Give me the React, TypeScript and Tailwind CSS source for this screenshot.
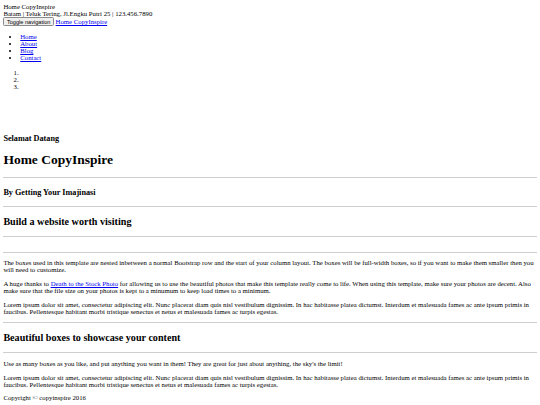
export default function App() {
  return (
    <div className="min-h-[405px] bg-white p-[3.375px] font-['Liberation_Serif',serif] text-[6.75px] leading-[normal] text-black">
      <div>Home CopyInspire</div>
      <div>Batam | Teluk Tering, Jl.Engku Putri 25 | 123.456.7890</div>
      <div>
        <button className="rounded-[1.5px] border border-[#8a8a8a] bg-[#efefef] px-[2.5px] py-[0.5px] font-['Liberation_Sans',sans-serif] text-[5.6px] leading-[normal] text-black">
          Toggle navigation
        </button>{" "}
        <a href="#" className="text-[#0000ee] underline">Home CopyInspire</a>
      </div>
      <ul className="my-[6.75px] list-disc pl-[16.875px]">
        <li><a href="#" className="text-[#0000ee] underline">Home</a></li>
        <li><a href="#" className="text-[#0000ee] underline">About</a></li>
        <li><a href="#" className="text-[#0000ee] underline">Blog</a></li>
        <li><a href="#" className="text-[#0000ee] underline">Contact</a></li>
      </ul>
      <ol className="my-[7.5px] list-decimal pl-[16.875px]">
        <li>&nbsp;</li>
        <li>&nbsp;</li>
        <li>&nbsp;</li>
      </ol>
      <div className="h-[29px]" />
      <h3 className="my-[8.2px] text-[8.2px] font-bold">Selamat Datang</h3>
      <h1 className="my-[9.04px] text-[13.5px] font-bold">Home CopyInspire</h1>
      <hr className="my-[3.375px] border-t border-[#cfcfcf]" />
      <h3 className="my-[9.2px] text-[8.2px] font-bold">By Getting Your Imajinasi</h3>
      <hr className="my-[3.375px] border-t border-[#cfcfcf]" />
      <h2 className="my-[9.2px] text-[10.125px] font-bold">Build a website worth visiting</h2>
      <hr className="my-[3.375px] border-t border-[#cfcfcf]" />
      <div className="h-[7.76px]" />
      <hr className="my-[3.375px] border-t border-[#cfcfcf]" />
      <p className="my-[6.75px]">
        The boxes used in this template are nested inbetween a normal Bootstrap row and the start of your column layout. The boxes will be full-width boxes, so if you want to make them smaller then you will need to customize.
      </p>
      <p className="my-[6.75px]">
        A huge thanks to <a href="#" className="text-[#0000ee] underline">Death to the Stock Photo</a> for allowing us to use the beautiful photos that make this template really come to life. When using this template, make sure your photos are decent. Also make sure that the file size on your photos is kept to a minumum to keep load times to a minimum.
      </p>
      <p className="my-[6.75px]">
        Lorem ipsum dolor sit amet, consectetur adipiscing elit. Nunc placerat diam quis nisl vestibulum dignissim. In hac habitasse platea dictumst. Interdum et malesuada fames ac ante ipsum primis in faucibus. Pellentesque habitant morbi tristique senectus et netus et malesuada fames ac turpis egestas.
      </p>
      <hr className="my-[3.375px] border-t border-[#cfcfcf]" />
      <h2 className="my-[9.2px] text-[10.125px] font-bold">Beautiful boxes to showcase your content</h2>
      <hr className="my-[3.375px] border-t border-[#cfcfcf]" />
      <p className="my-[6.75px]">
        Use as many boxes as you like, and put anything you want in them! They are great for just about anything, the sky's the limit!
      </p>
      <p className="my-[6.75px]">
        Lorem ipsum dolor sit amet, consectetur adipiscing elit. Nunc placerat diam quis nisl vestibulum dignissim. In hac habitasse platea dictumst. Interdum et malesuada fames ac ante ipsum primis in faucibus. Pellentesque habitant morbi tristique senectus et netus et malesuada fames ac turpis egestas.
      </p>
      <p className="my-[6.75px]">Copyright © copyinspire 2016</p>
    </div>
  );
}
